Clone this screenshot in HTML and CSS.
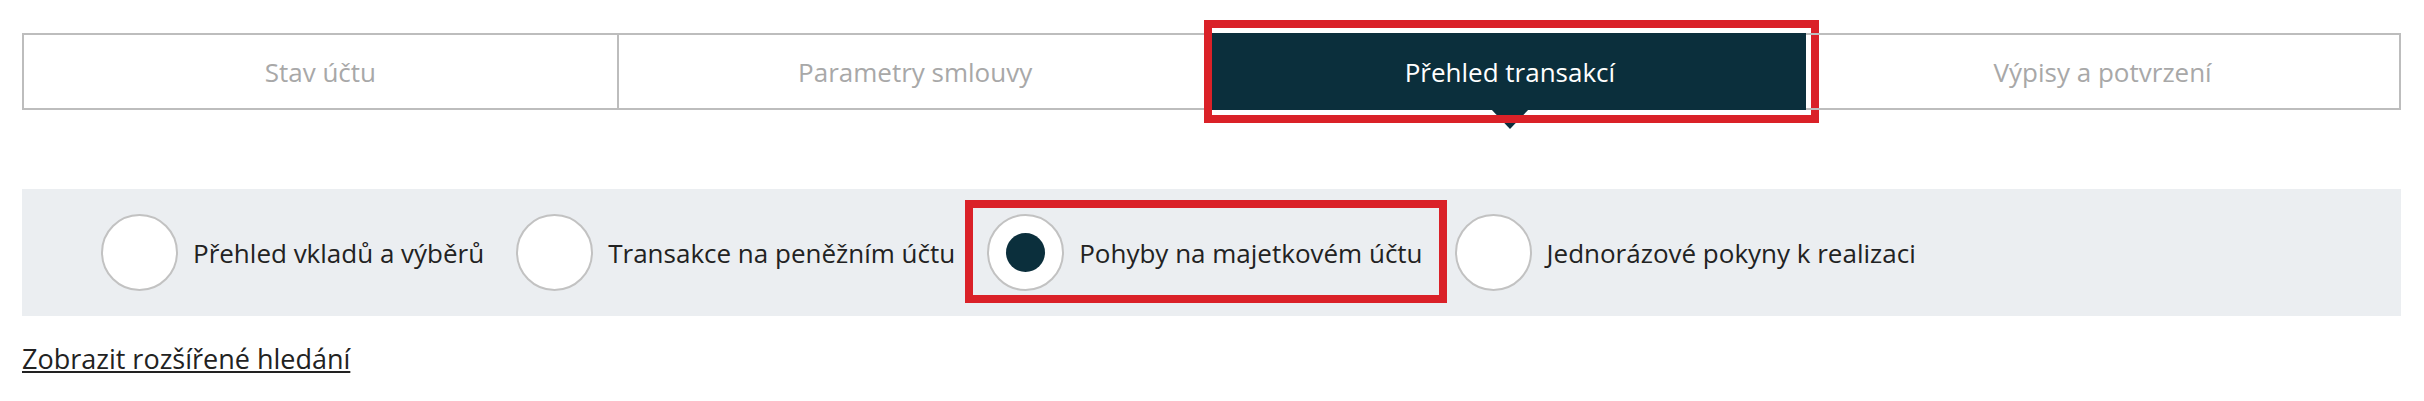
FILE: index.html
```html
<!DOCTYPE html>
<html lang="cs">
<head>
    <meta charset="UTF-8">
    <meta name="viewport" content="width=device-width, initial-scale=1.0">
    <title>Přehled transakcí</title>
    <link rel="stylesheet" href="styles.css">
</head>
<body>
    <div class="container">
        <div class="tabs">
            <div class="tab">Stav účtu</div>
            <div class="tab">Parametry smlouvy</div>
            <div class="tab active">Přehled transakcí</div>
            <div class="tab">Výpisy a potvrzení</div>
        </div>

        <div class="options">
            <label class="option">
                <span class="radio"></span>
                <span class="option-text">Přehled vkladů a výběrů</span>
            </label>
            <label class="option">
                <span class="radio"></span>
                <span class="option-text">Transakce na peněžním účtu</span>
            </label>
            <label class="option selected">
                <span class="radio"></span>
                <span class="option-text">Pohyby na majetkovém účtu</span>
            </label>
            <label class="option">
                <span class="radio"></span>
                <span class="option-text">Jednorázové pokyny k realizaci</span>
            </label>
        </div>

        <a class="search-link" href="#">Zobrazit rozšířené hledání</a>
    </div>
</body>
</html>
```

FILE: styles.css
```css
body {
    margin: 0;
    font-family: "Open Sans", "Liberation Sans", sans-serif;
    font-size: 26px;
    color: #222;
    background-color: #fff;
}
.container {
    padding: 33px 23px 0 22px;
}
.tabs {
    display: flex;
    height: 77px;
}
.tab {
    flex: 1;
    display: flex;
    align-items: center;
    justify-content: center;
    border: 2px solid #bdbdbd;
    border-right: none;
    color: #a8a8a8;
    position: relative;
}
.tab:last-child {
    border-right: 2px solid #bdbdbd;
}
.tab.active {
    background-color: #0b2f3c;
    border-color: #0b2f3c;
    color: #fff;
}
.tab.active + .tab {
    border-left: none;
}
/* little arrow under the selected tab */
.tab.active::before {
    content: "";
    position: absolute;
    left: 50%;
    bottom: -21px;
    margin-left: -20px;
    border-left: 20px solid transparent;
    border-right: 20px solid transparent;
    border-top: 21px solid #0b2f3c;
}
/* red highlight frame */
.tab.active::after {
    content: "";
    position: absolute;
    top: -15px;
    bottom: -15px;
    left: -10px;
    right: -13px;
    border: 8px solid #da2128;
}
.options {
    display: flex;
    align-items: center;
    gap: 32px;
    height: 127px;
    margin-top: 79px;
    padding-left: 79px;
    background-color: #ebeef1;
}
.option {
    display: flex;
    align-items: center;
    gap: 15px;
    position: relative;
}
.radio {
    width: 73px;
    height: 73px;
    border: 2px solid #c2c2c2;
    border-radius: 50%;
    background-color: #fff;
    display: flex;
    align-items: center;
    justify-content: center;
}
.option.selected .radio::before {
    content: "";
    width: 39px;
    height: 39px;
    border-radius: 50%;
    background-color: #0b2f3c;
}
.option.selected::after {
    content: "";
    position: absolute;
    top: -14px;
    bottom: -12px;
    left: -22px;
    right: -24px;
    border: 8px solid #da2128;
}
.search-link {
    display: inline-block;
    margin-top: 24px;
    font-size: 27px;
    color: #222;
}
```
